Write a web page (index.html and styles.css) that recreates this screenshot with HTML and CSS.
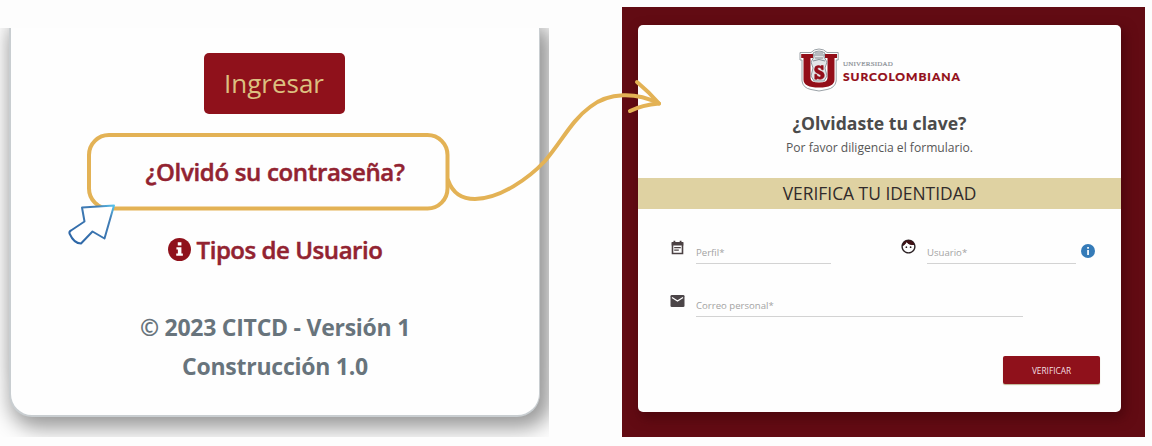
FILE: index.html
```html
<!DOCTYPE html>
<html lang="es">
<head>
<meta charset="utf-8">
<title>Recuperar clave</title>
<link rel="stylesheet" href="styles.css">
</head>
<body>
<main class="board">
  <section class="login-view">
    <div class="login-card">
      <button class="login-button"><span class="login-label">Ingresar</span></button>
      <a class="forgot"><span class="forgot-label">¿Olvidó su contraseña?</span></a>
      <a class="user-types">
        <svg class="info-icon" viewBox="0 0 24 24"><circle cx="12" cy="12" r="12" fill="#8f111b"/><path d="M10.2 4.400h3.800v3.500h-3.800zM8.800 9.600h5.200v6.600h1.500v2.300H8.600v-2.300h1.700v-4.300H8.800z" fill="#fff"/></svg>
        <span class="types-label">Tipos de Usuario</span>
      </a>
      <p class="version"><span class="version-a">© 2023 CITCD - Versión 1</span><span class="version-b">Construcción 1.0</span></p>
    </div>
  </section>
  <section class="recover-view">
    <form class="recover-card">
      <header class="brand">
        <svg class="shield" viewBox="0 0 40 44">
          <path d="M1 4.500H12Q15 1 20 1t8 3.500H39.200V12h-2v21Q36 40 28 41.500L20 43l-8-1.500Q4 40 3 33V12H1z" fill="#fff" stroke="#8f969c" stroke-width=".9"/>
          <path d="M2.200 6H14v4h-2.500v20q0 4.500 8.500 4.500t8.500-4.500V10H26V6h12v4h-2.500v21.500Q35.500 39.500 20 39.500T4.500 31.500V10H2.200z" fill="#930e19"/>
          <path d="M14 5q6-4 12 0l-1 4 3 5-2 6 2 8-3 5H15l-3-5 2-8-2-6 3-5z" fill="#e3e6e8" stroke="#778088" stroke-width=".8"/>
          <path d="M15 7h10M16 10h8M14 13q6-3 12 0M16 5h8" fill="none" stroke="#7d858c" stroke-width=".9"/>
          <path d="M24.200 17.500v4.300h-1.400q-.8-2.300-2.700-2.300-1.600 0-1.600 1.300 0 1.200 2.600 2 4.200 1.300 4.200 4.300 0 4.100-4.200 4.100-1.400 0-2.500-.7l-.5.700h-2.300v-5h1.600q.7 2.900 2.900 2.900 1.600 0 1.600-1.300 0-1.300-2.500-2.100-3.900-1.200-3.900-4.100 0-4 3.900-4 1.300 0 2.500.7l.4-.8z" fill="#930e19" stroke="#930e19" stroke-width=".6"/>
        </svg>
        <div class="brand-name"><span class="brand-top">UNIVERSIDAD</span><span class="brand-main">SURCOLOMBIANA</span></div>
      </header>
      <h1 class="title">¿Olvidaste tu clave?</h1>
      <p class="subtitle">Por favor diligencia el formulario.</p>
      <h2 class="banner">VERIFICA TU IDENTIDAD</h2>
      <div class="fields">
        <svg class="icon icon-profile" viewBox="0 0 14 16"><path d="M2 3.200h10v10.300H2z" fill="none" stroke="#4b4143" stroke-width="1.600"/><path d="M1.200 2h11.600v3.500H1.200zM3 .8h1.800v2H3zM9.200.8H11v2H9.200z" fill="#4b4143"/><path d="M3.700 7.700h6.600M3.700 10.200h4.600" stroke="#4b4143" stroke-width="1.200"/></svg>
        <span class="input input-profile">Perfil*</span>
        <svg class="icon-user" viewBox="0 0 24 24"><path d="M9 11.750c-.69 0-1.250.56-1.250 1.250s.56 1.250 1.250 1.250 1.250-.56 1.250-1.250-.56-1.250-1.250-1.250zm6 0c-.69 0-1.250.56-1.250 1.250s.56 1.250 1.250 1.250 1.250-.56 1.250-1.250-.56-1.250-1.250-1.250zM12 2C6.480 2 2 6.480 2 12s4.480 10 10 10 10-4.480 10-10S17.520 2 12 2zm0 18c-4.410 0-8-3.590-8-8 0-.29.02-.58.05-.86 2.360-1.050 4.230-2.980 5.210-5.370C11.070 8.330 14.050 10 17.420 10c.78 0 1.530-.09 2.250-.26.21.71.33 1.470.33 2.260 0 4.410-3.590 8-8 8z" fill="#2a2023"/><path d="M4 10Q5 3.500 12 3.500T20 9.700Q13 11 9.300 5.800 7.500 9.500 4 11z" fill="#421216"/></svg>
        <span class="input input-user">Usuario*</span>
        <svg class="icon-help" viewBox="0 0 14 14"><circle cx="7" cy="7" r="7" fill="#357bb8"/><path d="M6.200 3h1.700v1.700H6.200zM6.200 6h1.700v5H6.200z" fill="#fff"/></svg>
      </div>
      <div class="fields fields-mail">
        <svg class="icon icon-mail" viewBox="0 0 14 12"><rect width="14" height="12" rx="1.300" fill="#4b4548"/><path d="M1.500 2.500 7 6l5.500-3.500" fill="none" stroke="#fff" stroke-width="1.300"/></svg>
        <span class="input input-mail">Correo personal*</span>
      </div>
      <button class="verify"><span class="verify-label">VERIFICAR</span></button>
    </form>
  </section>
</main>
<svg class="annotations" viewBox="0 0 1152 446">
  <defs><linearGradient id="cursor" x1="0" y1="1" x2="1" y2="0"><stop offset="0" stop-color="#2b64a5"/><stop offset=".8" stop-color="#4480b7"/><stop offset="1" stop-color="#58c3ec"/></linearGradient></defs>
  <g fill="none" stroke="#e3b255" stroke-width="4" stroke-linecap="round" stroke-linejoin="round">
    <rect x="89" y="135" width="358.500" height="73.500" rx="20"/>
    <path d="M448 180C453 194 462 199 475 199C500 199 529 178 545 161C562 141 572 120 590 107C609 92 636 92 659 103.500"/>
    <path d="M637 82Q649 92 659 103.500Q642 105 630 111"/>
  </g>
  <path d="M82 207.500 114 205.500 104.500 238.500 92.500 231.500 81 243.500Q74 243.500 69.500 233.500Q69 231.500 71 230.500L84.500 221.500z" fill="#fff" stroke="url(#cursor)" stroke-width="2" stroke-linejoin="round"/>
</svg>
</body>
</html>
```
FILE: styles.css
```css
* { box-sizing: border-box; }
body { margin: 0; width: 1152px; height: 446px; overflow: hidden; background: #fdfdfd; font-family: "Open Sans", "Noto Sans", sans-serif; }
p, h1, h2 { margin: 0; }
button { border: 0; padding: 0; font-family: inherit; display: flex; align-items: center; justify-content: center; }
span { white-space: nowrap; }
.board { display: flex; align-items: flex-start; height: 446px; }
.login-view { width: 549px; height: 409px; margin-top: 28px; padding: 0 8px 0 9px; overflow: hidden; }
.login-card { width: 531px; height: 389px; padding-top: 25px; border: 2px solid #c9ced1; border-top: 0; border-right-width: 1px; border-radius: 0 0 23px 23px; background: #fefefe; box-shadow: 6px 6px 20px 5px #999, 0 -30px 14px 0 #e8e8e8; display: flex; flex-direction: column; align-items: center; }
.login-button { width: 141px; height: 61px; margin-right: 2px; padding-bottom: 2px; border-radius: 5px; background: #8f111b; color: #dcc080; font-size: 26px; }
.forgot { margin-top: 38px; height: 40px; line-height: 40px; color: #922331; font-size: 24px; font-weight: 600; letter-spacing: -.32px; -webkit-text-stroke: .5px; }
.user-types { margin-top: 37px; height: 40px; display: flex; align-items: center; gap: 6px; color: #922331; font-size: 24px; font-weight: 600; letter-spacing: -.45px; -webkit-text-stroke: .5px; }
.info-icon { width: 23px; height: 23px; }
.version { margin-top: 39px; display: flex; flex-direction: column; align-items: center; color: #68747c; font-size: 23px; font-weight: 700; line-height: 39px; letter-spacing: -.25px; }
.recover-view { width: 523px; height: 430px; margin: 7px 0 0 73px; padding: 18px 0 0 16px; background: #620b13; }
.recover-card { width: 483px; height: 387px; border-radius: 5px; background: #fefefe; box-shadow: 3px 5px 12px 1px #4d060d; display: flex; flex-direction: column; }
.brand { margin-top: 23px; height: 44px; padding-left: 161px; display: flex; align-items: flex-start; gap: 4px; }
.shield { width: 40px; height: 44px; }
.brand-name { padding-top: 12px; display: flex; flex-direction: column; }
.brand-top { height: 8px; color: #8b9096; font: 7px/8px "Liberation Serif", serif; letter-spacing: .2px; -webkit-text-stroke: .2px #8b9096; }
.brand-main { color: #930e19; font: 900 12px/17px Lato, sans-serif; letter-spacing: .95px; -webkit-text-stroke: .2px; }
.title { margin-top: 18px; color: #4b4b4b; font-size: 17.600px; line-height: 26px; text-align: center; }
.subtitle { color: #575757; font-size: 12.100px; line-height: 24px; text-align: center; }
.banner { margin-top: 18px; height: 31px; background: #dfd2a2; color: #302a2b; font-size: 17.400px; font-weight: 400; line-height: 31px; text-align: center; }
.fields { margin-top: 31px; height: 24px; padding-left: 32px; display: flex; align-items: flex-start; }
.icon { width: 15px; margin-right: 11px; }
.icon-profile { height: 16px; }
.icon-mail { height: 12px; margin-top: 2px; }
.input { height: 24px; border-bottom: 1px solid #d3d3d3; color: #a3a3a3; font-size: 9.600px; line-height: 25px; }
.input-profile { width: 135px; }
.icon-user { width: 17px; height: 17px; margin: -2px 10px 0 69px; }
.input-user { width: 149px; }
.icon-help { width: 14px; height: 14px; margin: 4px 0 0 5px; }
.fields-mail { margin-top: 29px; }
.input-mail { width: 327px; }
.verify { width: 97px; height: 28px; margin: 39px 0 0 365px; border-radius: 2px; background: #8f111b; color: #f3dfe0; font-size: 8.300px; box-shadow: 0 1px 1px #bdb594; }
.annotations { position: absolute; left: 0; top: 0; width: 1152px; height: 446px; pointer-events: none; }
```
